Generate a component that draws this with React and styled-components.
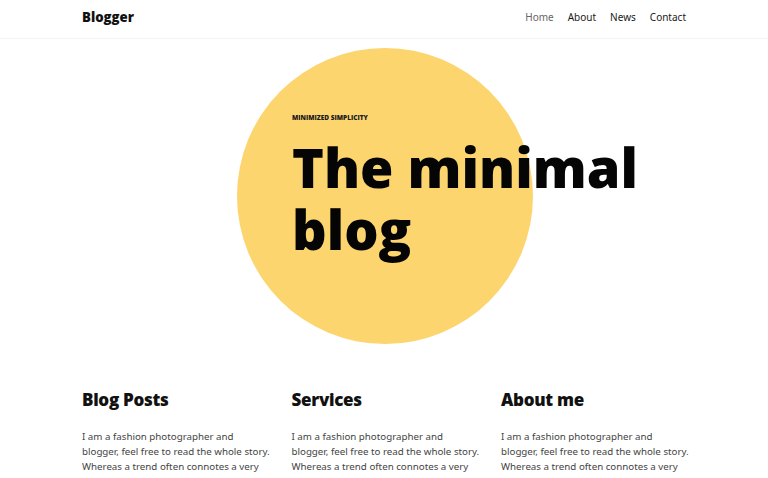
import React from 'react';
import styled, { createGlobalStyle } from 'styled-components';

const GlobalStyle = createGlobalStyle`
  * {
    box-sizing: border-box;
  }
  body {
    margin: 0;
    background: #ffffff;
    font-family: "Noto Sans", Inter, sans-serif;
    color: #111111;
  }
`;

const display = `"Open Sans", "Noto Sans", sans-serif`;

const columns = [
  { title: 'Blog Posts' },
  { title: 'Services' },
  { title: 'About me' },
];

const story =
  'I am a fashion photographer and blogger, feel free to read the whole story. Whereas a trend often connotes a very specific aesthetic, style is more about the way you wear it.';

function App() {
  return (
    <>
      <GlobalStyle />
      <Header>
        <Bar>
          <Logo href="/">Blogger</Logo>
          <Nav>
            <NavLink href="/" active>
              Home
            </NavLink>
            <NavLink href="/">About</NavLink>
            <NavLink href="/">News</NavLink>
            <NavLink href="/">Contact</NavLink>
          </Nav>
        </Bar>
      </Header>
      <Hero>
        <Circle>
          <Eyebrow>Minimized simplicity</Eyebrow>
          <Title>The minimal blog</Title>
        </Circle>
      </Hero>
      <Columns>
        {columns.map((col) => (
          <Column key={col.title}>
            <ColumnTitle>{col.title}</ColumnTitle>
            <ColumnText>{story}</ColumnText>
          </Column>
        ))}
      </Columns>
    </>
  );
}

const Header = styled.header`
  border-bottom: 1px solid #f3f3f3;
`;

const Bar = styled.div`
  max-width: 604px;
  margin: 0 auto;
  height: 38px;
  display: flex;
  align-items: center;
  justify-content: space-between;
`;

const Logo = styled.a`
  font-family: ${display};
  font-size: 13.2px;
  font-weight: 800;
  color: #111;
  text-decoration: none;
  margin-top: -4px;
`;

const Nav = styled.nav`
  display: flex;
  gap: 14px;
  margin-top: -4px;
`;

const NavLink = styled.a`
  font-size: 10px;
  font-weight: 400;
  text-decoration: none;
  color: ${(p) => (p.active ? '#666' : '#1a1a1a')};
`;

const Hero = styled.section`
  display: flex;
  justify-content: center;
  padding-top: 9px;
`;

const Circle = styled.div`
  width: 296px;
  height: 296px;
  border-radius: 50%;
  background: #fdd56e;
  padding: 65px 0 0 55px;
  margin-left: 2px;
`;

const Eyebrow = styled.div`
  font-family: ${display};
  font-size: 6.5px;
  font-weight: 800;
  text-transform: uppercase;
  color: #1a1a1a;
`;

const Title = styled.h1`
  width: 400px;
  margin: 14px 0 0;
  font-family: ${display};
  font-size: 54px;
  font-weight: 800;
  line-height: 62px;
  color: #050505;
`;

const Columns = styled.section`
  max-width: 604px;
  margin: 0 auto;
  padding-top: 44px;
  display: grid;
  grid-template-columns: repeat(3, 189.5px);
  column-gap: 20px;
`;

const Column = styled.div``;

const ColumnTitle = styled.h2`
  margin: 0;
  font-family: ${display};
  font-size: 17px;
  font-weight: 800;
  letter-spacing: -0.3px;
  line-height: 24px;
`;

const ColumnText = styled.p`
  margin: 17px 0 0;
  font-size: 9.74px;
  line-height: 15px;
  color: #444;
`;

export default App;
